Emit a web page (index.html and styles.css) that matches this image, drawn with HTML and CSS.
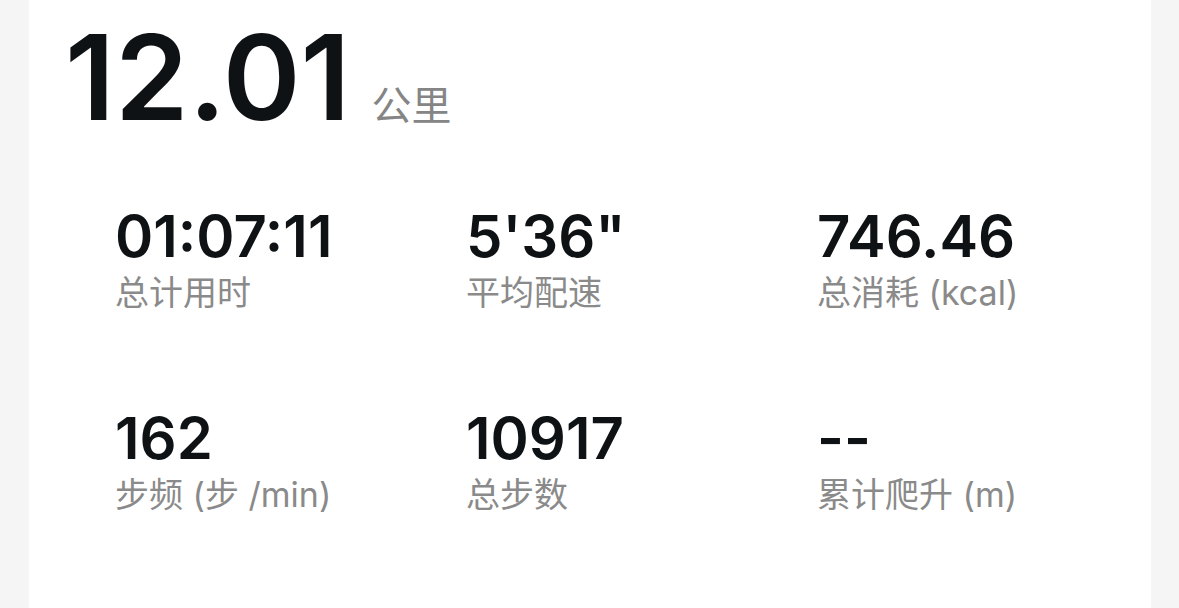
FILE: index.html
```html
<html>
<head>
  <title>跑步详情</title>
  <link rel="stylesheet" href="styles.css">
</head>
<body>
  <div class="card">
    <div class="distance">
      <span class="distance-value">12.01</span>
      <span class="distance-unit">公里</span>
    </div>
    <div class="stats">
      <div class="stat">
        <div class="stat-value">01:07:11</div>
        <div class="stat-label">总计用时</div>
      </div>
      <div class="stat">
        <div class="stat-value">5'36"</div>
        <div class="stat-label">平均配速</div>
      </div>
      <div class="stat">
        <div class="stat-value">746.46</div>
        <div class="stat-label">总消耗 (kcal)</div>
      </div>
      <div class="stat">
        <div class="stat-value">162</div>
        <div class="stat-label">步频 (步 /min)</div>
      </div>
      <div class="stat">
        <div class="stat-value">10917</div>
        <div class="stat-label">总步数</div>
      </div>
      <div class="stat">
        <div class="stat-value">--</div>
        <div class="stat-label">累计爬升 (m)</div>
      </div>
    </div>
  </div>
</body>
</html>
```

FILE: styles.css
```css
html, body {
  margin: 0;
  height: 100%;
  background-color: #f5f5f5;
  font-family: "Inter", "Noto Sans CJK SC", sans-serif;
  overflow: hidden;
}

.card {
  margin-left: 29px;
  width: 1122px;
  height: 100%;
  background-color: #ffffff;
  box-sizing: border-box;
  padding-top: 18px;
}

/* 总距离 */
.distance {
  display: flex;
  align-items: baseline;
  padding-left: 36px;
}

.distance-value {
  font-size: 118px;
  line-height: 118px;
  font-weight: 600;
  color: #0e1214;
}

.distance-unit {
  margin-left: 21px;
  font-size: 40px;
  color: #858585;
}

/* 数据网格 */
.stats {
  display: grid;
  grid-template-columns: 351px 351px 351px;
  row-gap: 96px;
  padding-left: 86px;
  margin-top: 71px;
}

.stat-value {
  font-size: 58px;
  line-height: 58px;
  font-weight: 600;
  color: #0e1214;
}

.stat-label {
  margin-top: 8px;
  font-size: 34px;
  line-height: 40px;
  color: #8a8a8a;
}
```
